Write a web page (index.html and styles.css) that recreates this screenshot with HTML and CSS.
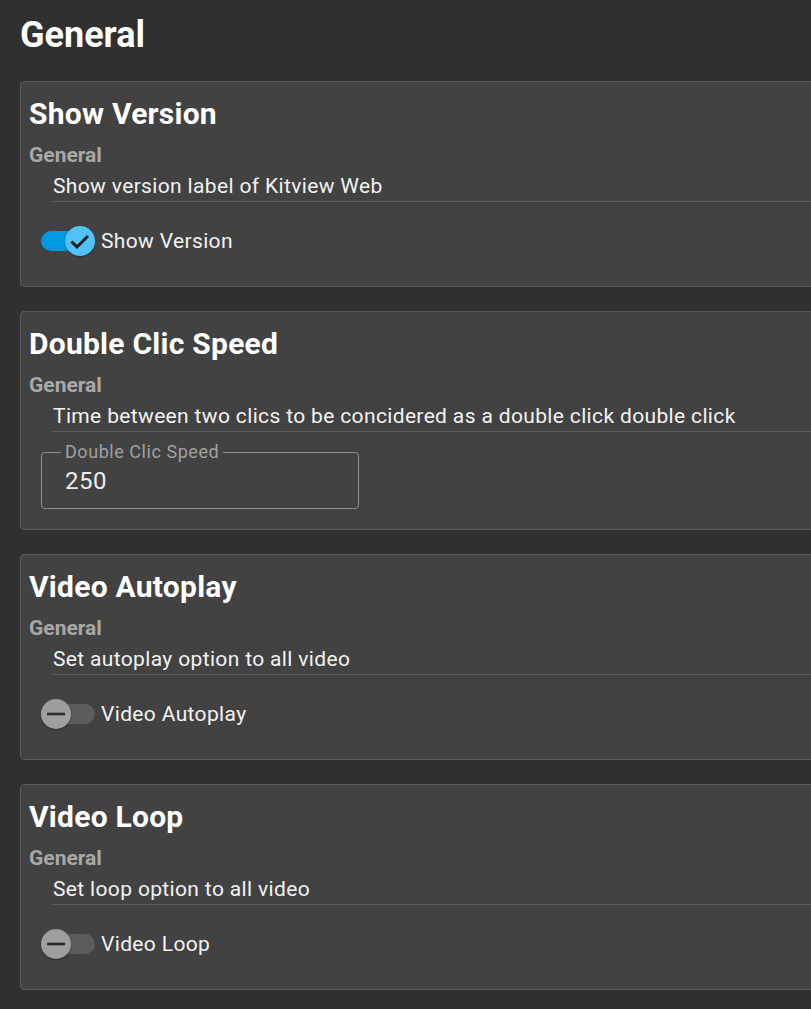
FILE: index.html
```html
<!DOCTYPE html>
<html>
<head>
<meta charset="utf-8">
<link rel="stylesheet" href="styles.css">
</head>
<body>
<main class="page">
  <h1 class="page-title">General</h1>

  <section class="card">
    <h2 class="card-title">Show Version</h2>
    <div class="card-group">General</div>
    <p class="card-desc">Show version label of Kitview Web</p>
    <label class="toggle-row">
      <span class="switch on">
        <span class="track"></span>
        <span class="thumb"><svg viewBox="0 0 30 30" width="30" height="30"><polyline points="6.5,15.5 12,21 23,10" fill="none" stroke="#1d1d1d" stroke-width="2.9"/></svg></span>
      </span>
      <span class="toggle-label">Show Version</span>
    </label>
  </section>

  <section class="card">
    <h2 class="card-title">Double Clic Speed</h2>
    <div class="card-group">General</div>
    <p class="card-desc">Time between two clics to be concidered as a double click double click</p>
    <fieldset class="field">
      <legend class="field-legend">Double Clic Speed</legend>
      <div class="field-value">250</div>
    </fieldset>
  </section>

  <section class="card">
    <h2 class="card-title">Video Autoplay</h2>
    <div class="card-group">General</div>
    <p class="card-desc">Set autoplay option to all video</p>
    <label class="toggle-row">
      <span class="switch off">
        <span class="track"></span>
        <span class="thumb"><svg viewBox="0 0 30 30" width="30" height="30"><line x1="6" y1="15" x2="24" y2="15" stroke="#2a2a2a" stroke-width="2.6"/></svg></span>
      </span>
      <span class="toggle-label">Video Autoplay</span>
    </label>
  </section>

  <section class="card">
    <h2 class="card-title">Video Loop</h2>
    <div class="card-group">General</div>
    <p class="card-desc">Set loop option to all video</p>
    <label class="toggle-row">
      <span class="switch off">
        <span class="track"></span>
        <span class="thumb"><svg viewBox="0 0 30 30" width="30" height="30"><line x1="6" y1="15" x2="24" y2="15" stroke="#2a2a2a" stroke-width="2.6"/></svg></span>
      </span>
      <span class="toggle-label">Video Loop</span>
    </label>
  </section>
</main>
</body>
</html>
```

FILE: styles.css
```css
html, body {
  margin: 0;
  padding: 0;
  background: #303030;
  overflow: hidden;
}
body {
  font-family: Roboto, "Liberation Sans", sans-serif;
  color: #f2f2f2;
}
.page {
  padding: 13px 0 0 20px;
  display: flex;
  flex-direction: column;
}
.page-title {
  margin: 0 0 24px 0;
  font-size: 36px;
  line-height: 44px;
  font-weight: 700;
  color: #ffffff;
}
.card {
  margin: 0 -20px 24px 0;
  background: #424242;
  border: 1px solid #5a5a5a;
  border-radius: 4px;
  padding: 14px 8px 30px 8px;
  display: flex;
  flex-direction: column;
  align-items: flex-start;
}
.card-title {
  margin: 0;
  font-size: 30px;
  line-height: 36px;
  font-weight: 700;
  letter-spacing: 0.25px;
  color: #ffffff;
}
.card-group {
  margin-top: 11px;
  font-size: 21px;
  line-height: 24px;
  font-weight: 700;
  color: #a8a8a8;
}
.card-desc {
  align-self: stretch;
  margin: 7px 0 0 24px;
  padding-bottom: 3px;
  border-bottom: 1px solid #5e5e5e;
  font-size: 21px;
  line-height: 24px;
  letter-spacing: 0.35px;
  color: #f2f2f2;
}
.toggle-row {
  margin: 24px 0 0 12px;
  display: flex;
  align-items: center;
  gap: 6px;
}
.toggle-label {
  font-size: 21px;
  line-height: 24px;
  letter-spacing: 0.35px;
  color: #f2f2f2;
}
.switch {
  display: grid;
  width: 54px;
  height: 30px;
  align-items: center;
}
.track, .thumb {
  grid-area: 1 / 1;
}
.track {
  height: 20px;
  border-radius: 10px;
  background: #5c5c5c;
}
.thumb {
  width: 30px;
  height: 30px;
  border-radius: 50%;
  background: #9e9e9e;
  justify-self: start;
  display: flex;
  box-shadow: 0 1px 2px rgba(0,0,0,0.35);
}
.switch.on .track {
  background: #0498e1;
}
.switch.on .thumb {
  background: #4fc3f7;
  justify-self: end;
}
.field {
  margin: 10px 0 0 12px;
  width: 318px;
  box-sizing: border-box;
  border: 1px solid #8c8c8c;
  border-radius: 4px;
  padding: 5px 0 13px 19px;
  margin-bottom: -10px;
}
.field-legend {
  padding: 0 4px;
  font-size: 18px;
  line-height: 20px;
  letter-spacing: 0.55px;
  color: #a0a0a0;
}
.field-value {
  padding-left: 4px;
  font-size: 24px;
  line-height: 28px;
  letter-spacing: 0.5px;
  color: #ececec;
}
```
